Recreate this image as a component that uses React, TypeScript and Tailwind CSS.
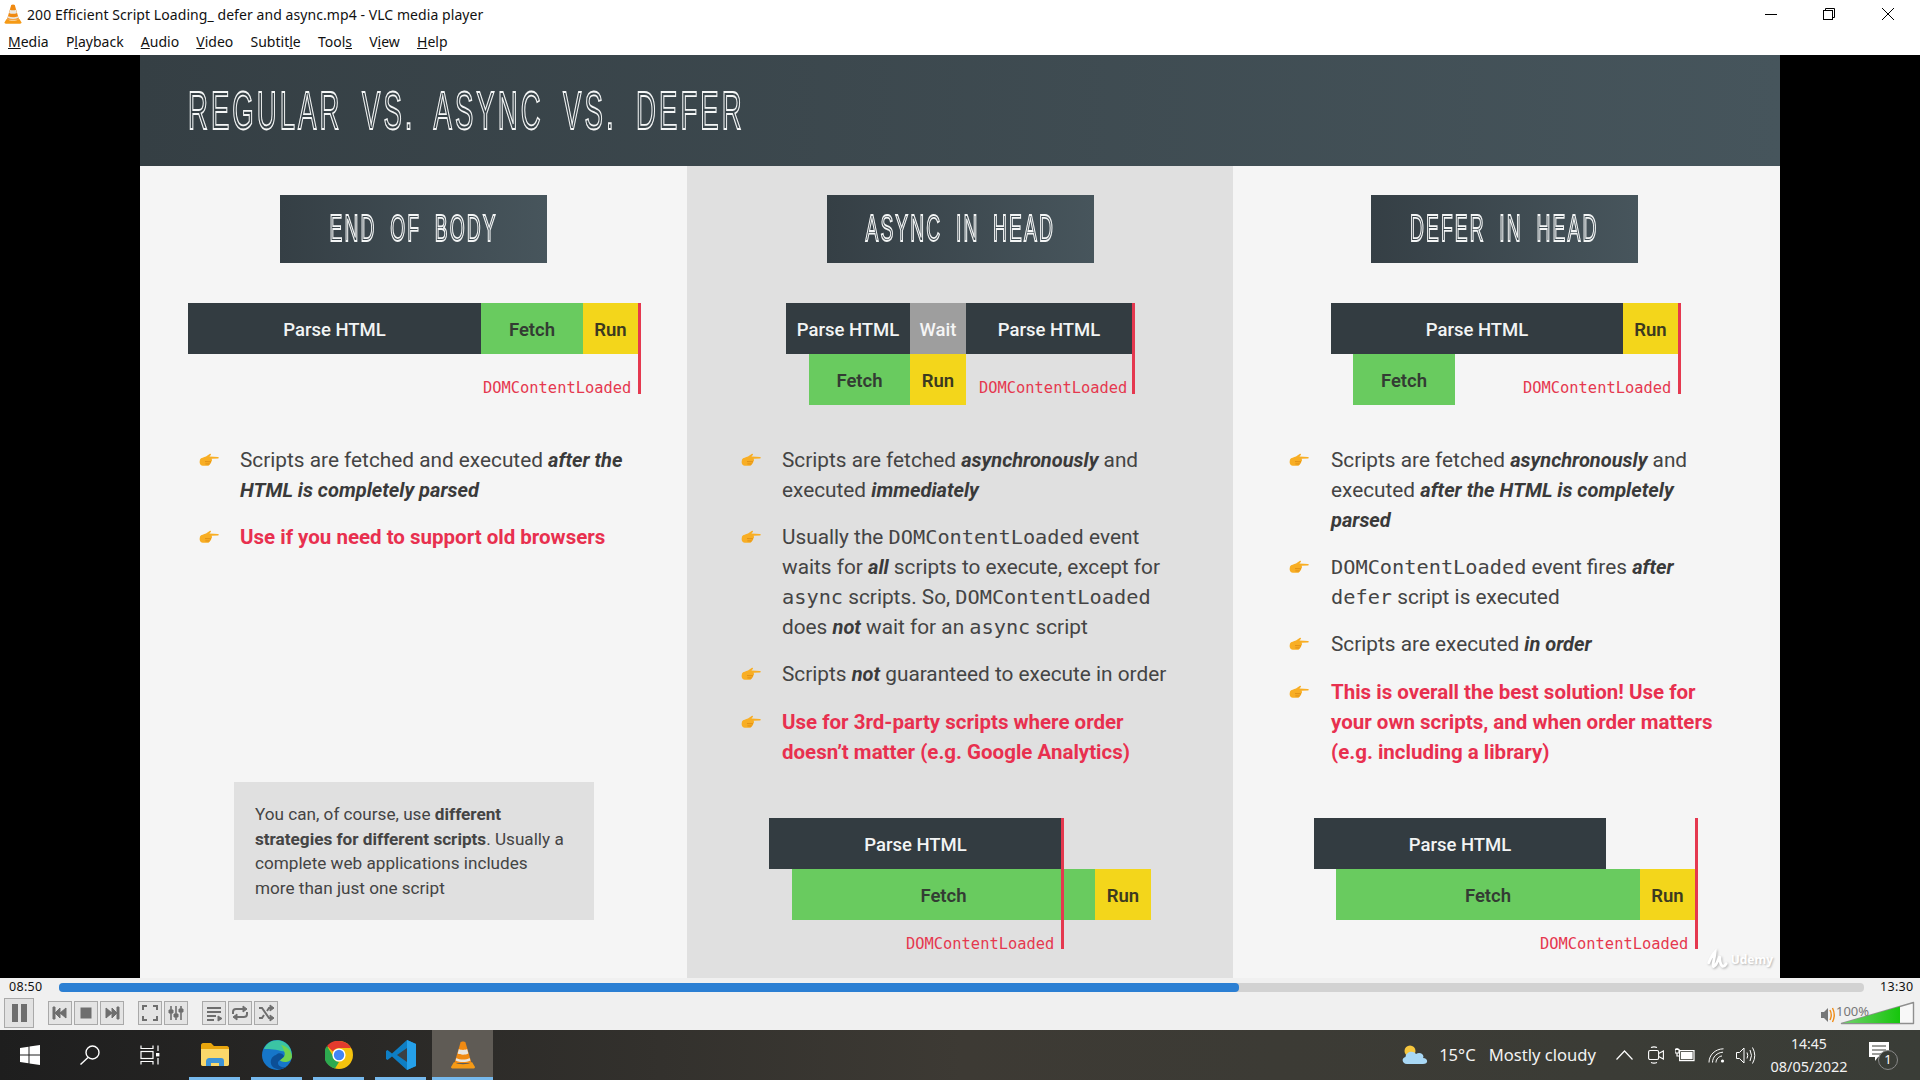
import type { ReactNode } from "react";

const roboto = "font-['Roboto',sans-serif]";
const mono = "font-['DejaVu_Sans_Mono',monospace]";
const ui = "font-['Noto_Sans',sans-serif]";

type Cell = { label: string; kind: "parse" | "wait" | "fetch" | "run"; w: string };
type Row = { ml: string; cells: Cell[]; note?: string };

const cellStyle = {
  parse: "bg-[#333c41] text-[#f2f4f4] font-medium",
  wait: "bg-[#9e9e9e] text-[#f5f5f5] font-medium",
  fetch: "bg-[#69cb5f] text-[#333c33] font-semibold",
  run: "bg-[#f3d61b] text-[#3c3a20] font-semibold",
};

function Hand() {
  return (
    <svg width="20" height="14" viewBox="0 0 20 14" className="mt-[8px] shrink-0">
      <path
        d="M1 6.5 C2 4.5 5 4.5 7 3.5 L11 .8 C12 .4 12.4 1.6 11.6 2.3 L10.4 3.6 L19 3.9 C20 4.2 20 5.2 19 5.4 L12.6 5.8 C13.4 7 13 8.4 12.2 8.8 C12.4 10 11.6 10.8 10.8 11 C10.6 12.2 9.8 12.8 8.6 12.8 L4 12.8 C2 12.8 .6 11 .6 9 Z"
        fill="#f8ae24"
      />
      <path d="M6 8.6 L12 8.8 M6.4 10.9 L10.8 11" stroke="#d98710" strokeWidth=".8" />
    </svg>
  );
}

function Code({ children }: { children: ReactNode }) {
  return <span className={`${mono} text-[20.3px]`}>{children}</span>;
}

function Strong({ children }: { children: ReactNode }) {
  return <em className="text-[20px] font-bold italic text-[#3a3a3a]">{children}</em>;
}

function Red({ children }: { children: ReactNode }) {
  return <span className="text-[20.5px] font-bold text-[#e8304f]">{children}</span>;
}

function Bullets({ ml, gap, items }: { ml: string; gap: string; items: ReactNode[] }) {
  return (
    <ul className={`flex flex-col gap-[17.2px] ${ml}`}>
      {items.map((item, i) => (
        <li key={i} className={`flex ${gap} ${roboto} text-[20.8px] leading-[30px] text-[#444] whitespace-nowrap`}>
          <Hand />
          <p>{item}</p>
        </li>
      ))}
    </ul>
  );
}

function Gantt({
  ml,
  rows,
  marker,
  markerH,
  labelMl,
  labelPt,
}: {
  ml: string;
  rows: Row[];
  marker: string;
  markerH: string;
  labelMl?: string;
  labelPt?: string;
}) {
  return (
    <div className={`relative ${ml} ${roboto} text-[18.5px]`}>
      {rows.map((row, i) => (
        <div key={i} className={`flex h-[51px] ${row.ml}`}>
          {row.cells.map((c, j) => (
            <div key={j} className={`flex items-center justify-center pt-[5px] ${c.w} ${cellStyle[c.kind]}`}>
              {c.label}
            </div>
          ))}
          {row.note && (
            <span className={`${mono} ${row.note} pt-[24px] text-[15.4px] leading-[20px] text-[#e5384f]`}>
              DOMContentLoaded
            </span>
          )}
        </div>
      ))}
      {labelMl && (
        <div className={`${mono} ${labelMl} ${labelPt} text-[15.4px] leading-[20px] text-[#e5384f]`}>
          DOMContentLoaded
        </div>
      )}
      <div className={`absolute top-0 w-[3px] bg-[#e5384f] ${marker} ${markerH}`} />
    </div>
  );
}

function Badge({ ml, children }: { ml: string; children: string }) {
  return (
    <div
      className={`flex h-[68px] w-[267px] shrink-0 items-center justify-center bg-gradient-to-r from-[#353f45] to-[#47555c] ${ml}`}
    >
      <OutlineText size="text-[37px] origin-center">{children}</OutlineText>
    </div>
  );
}

function OutlineText({ size, children }: { size: string; children: string }) {
  return (
    <span
      className={`inline-block scale-x-[0.52] whitespace-nowrap font-['Liberation_Sans_Narrow','Liberation_Sans',sans-serif] tracking-[0.11em] text-transparent [word-spacing:0.32em] [-webkit-text-stroke:1.8px_#f4f6f6] ${size}`}
    >
      {children}
    </span>
  );
}

function CtlBtn({ children, className }: { children: ReactNode; className?: string }) {
  return (
    <button className={`flex h-[24px] w-[24px] items-center justify-center border border-[#a9a9a9] bg-[#e4e4e4] ${className ?? ""}`}>
      <svg width="18" height="18" viewBox="0 0 18 18" fill="#6e6e6e" stroke="#6e6e6e">
        {children}
      </svg>
    </button>
  );
}

function VlcCone({ size }: { size: number }) {
  return (
    <svg width={size} height={size} viewBox="0 0 26 28">
      <path d="M10.5 1.5 C11.5 .2 14.5 .2 15.5 1.5 L21.5 22 L4.5 22 Z" fill="#f08a12" />
      <path d="M8.9 8 C11 9.2 15 9.2 17.1 8 L18.4 12.6 C15.5 14.2 10.5 14.2 7.6 12.6 Z" fill="#e9e6e0" />
      <path d="M6.4 17 C10 19 16 19 19.6 17 L20.4 19.5 C16 21.6 10 21.6 5.6 19.5 Z" fill="#e9e6e0" />
      <path d="M4 21 L1 26 C1 27 2 27.6 3 27.6 L23 27.6 C24 27.6 25 27 25 26 L22 21 C18 24 8 24 4 21 Z" fill="#f59a16" />
    </svg>
  );
}

function TaskApp({ active, children }: { active?: boolean; children: ReactNode }) {
  return (
    <div className={`relative flex h-[50px] items-center justify-center ${active ? "w-[61px] bg-[#5f5b55]" : "w-[51px]"}`}>
      {children}
      <div className={`absolute bottom-0 h-[3px] bg-[#76b9ed] ${active ? "w-[61px]" : "w-[51px]"}`} />
    </div>
  );
}

const menus = ["Media", "Playback", "Audio", "Video", "Subtitle", "Tools", "View", "Help"];
const underlined = [0, 1, 0, 0, 6, 4, 1, 0];

export default function App() {
  return (
    <div className={`flex h-[1080px] w-[1920px] flex-col overflow-hidden bg-white ${ui}`}>
      {/* title bar */}
      <div className="flex h-[28px] items-center">
        <div className="ml-[3px] w-[24px]">
          <VlcCone size={20} />
        </div>
        <span className="text-[14px] tracking-[0.07px] text-[#111]">
          200 Efficient Script Loading_ defer and async.mp4 - VLC media player
        </span>
        <div className="ml-auto flex items-center">
          <div className="mr-[46px] h-px w-[12px] bg-black" />
          <svg width="12" height="12" viewBox="0 0 12 12" fill="none" stroke="black" className="mr-[47px]">
            <rect x=".5" y="2.5" width="9" height="9" />
            <path d="M2.5 2.5 V.5 H11.5 V9.5 H9.5" />
          </svg>
          <svg width="12" height="12" viewBox="0 0 12 12" stroke="black" className="mr-[26px]">
            <path d="M0 0 L12 12 M12 0 L0 12" />
          </svg>
        </div>
      </div>

      {/* menu bar */}
      <div className="flex h-[27px] items-center gap-[17.2px] pl-[8px] text-[14px] text-[#111]">
        {menus.map((m, i) => (
          <span key={m}>
            {m.slice(0, underlined[i])}
            <span className="underline">{m[underlined[i]]}</span>
            {m.slice(underlined[i] + 1)}
          </span>
        ))}
      </div>

      {/* video */}
      <div className="flex h-[923px] justify-center bg-black">
        <div className="relative flex w-[1640px] flex-col bg-[#f5f5f5]">
          <div className="flex h-[111px] items-center bg-gradient-to-r from-[#353f44] to-[#46555c] pl-[48px]">
            <OutlineText size="text-[53px] origin-left">REGULAR VS. ASYNC VS. DEFER</OutlineText>
          </div>
          <div className="flex flex-1">
            {/* end of body */}
            <section className="flex w-[547px] flex-col pt-[29px]">
              <Badge ml="ml-[140px]">END OF BODY</Badge>
              <div className="mt-[40px] h-[142px]">
                <Gantt
                  ml="ml-[48px]"
                  marker="left-[450px]"
                  markerH="h-[91px]"
                  rows={[
                    {
                      ml: "",
                      cells: [
                        { label: "Parse HTML", kind: "parse", w: "w-[293px]" },
                        { label: "Fetch", kind: "fetch", w: "w-[102px]" },
                        { label: "Run", kind: "run", w: "w-[55px]" },
                      ],
                    },
                    { ml: "", cells: [], note: "ml-[295px]" },
                  ]}
                />
              </div>
              <Bullets
                ml="ml-[59px]"
                gap="gap-[21px]"
                items={[
                  <>
                    Scripts are fetched and executed <Strong>after the</Strong>
                    <br />
                    <Strong>HTML is completely parsed</Strong>
                  </>,
                  <Red>Use if you need to support old browsers</Red>,
                ]}
              />
              <div className={`mb-[58px] ml-[94px] mt-auto h-[138px] w-[360px] bg-[#e0e0e0] px-[21px] py-[20px] ${roboto} text-[17.15px] leading-[24.5px] text-[#444] whitespace-nowrap`}>
                You can, of course, use <b className="font-bold">different</b>
                <br />
                <b className="font-bold">strategies for different scripts</b>. Usually a
                <br />
                complete web applications includes
                <br />
                more than just one script
              </div>
            </section>

            {/* async in head */}
            <section className="flex w-[546px] flex-col bg-[#e0e0e0] pt-[29px]">
              <Badge ml="ml-[140px]">ASYNC IN HEAD</Badge>
              <div className="mt-[40px] h-[142px]">
                <Gantt
                  ml="ml-[99px]"
                  marker="left-[346px]"
                  markerH="h-[91px]"
                  rows={[
                    {
                      ml: "",
                      cells: [
                        { label: "Parse HTML", kind: "parse", w: "w-[124px]" },
                        { label: "Wait", kind: "wait", w: "w-[56px]" },
                        { label: "Parse HTML", kind: "parse", w: "w-[166px]" },
                      ],
                    },
                    {
                      ml: "ml-[23px]",
                      cells: [
                        { label: "Fetch", kind: "fetch", w: "w-[101px]" },
                        { label: "Run", kind: "run", w: "w-[56px]" },
                      ],
                      note: "ml-[13px]",
                    },
                  ]}
                />
              </div>
              <Bullets
                ml="ml-[54px]"
                gap="gap-[21px]"
                items={[
                  <>
                    Scripts are fetched <Strong>asynchronously</Strong> and
                    <br />
                    executed <Strong>immediately</Strong>
                  </>,
                  <>
                    Usually the <Code>DOMContentLoaded</Code> event
                    <br />
                    waits for <Strong>all</Strong> scripts to execute, except for
                    <br />
                    <Code>async</Code> scripts. So, <Code>DOMContentLoaded</Code>
                    <br />
                    does <Strong>not</Strong> wait for an <Code>async</Code> script
                  </>,
                  <>
                    Scripts <Strong>not</Strong> guaranteed to execute in order
                  </>,
                  <Red>
                    Use for 3rd-party scripts where order
                    <br />
                    doesn’t matter (e.g. Google Analytics)
                  </Red>,
                ]}
              />
              <div className="mb-[24px] mt-auto">
                <Gantt
                  ml="ml-[82px]"
                  marker="left-[292px]"
                  markerH="h-[131px]"
                  labelMl="ml-[137px]"
                  labelPt="pt-[14px]"
                  rows={[
                    { ml: "", cells: [{ label: "Parse HTML", kind: "parse", w: "w-[293px]" }] },
                    {
                      ml: "ml-[23px]",
                      cells: [
                        { label: "Fetch", kind: "fetch", w: "w-[303px]" },
                        { label: "Run", kind: "run", w: "w-[56px]" },
                      ],
                    },
                  ]}
                />
              </div>
            </section>

            {/* defer in head */}
            <section className="flex w-[547px] flex-col pt-[29px]">
              <Badge ml="ml-[138px]">DEFER IN HEAD</Badge>
              <div className="mt-[40px] h-[142px]">
                <Gantt
                  ml="ml-[98px]"
                  marker="left-[347px]"
                  markerH="h-[91px]"
                  rows={[
                    {
                      ml: "",
                      cells: [
                        { label: "Parse HTML", kind: "parse", w: "w-[292px]" },
                        { label: "Run", kind: "run", w: "w-[55px]" },
                      ],
                    },
                    {
                      ml: "ml-[22px]",
                      cells: [{ label: "Fetch", kind: "fetch", w: "w-[102px]" }],
                      note: "ml-[68px]",
                    },
                  ]}
                />
              </div>
              <Bullets
                ml="ml-[56px]"
                gap="gap-[22px]"
                items={[
                  <>
                    Scripts are fetched <Strong>asynchronously</Strong> and
                    <br />
                    executed <Strong>after the HTML is completely</Strong>
                    <br />
                    <Strong>parsed</Strong>
                  </>,
                  <>
                    <Code>DOMContentLoaded</Code> event fires <Strong>after</Strong>
                    <br />
                    <Code>defer</Code> script is executed
                  </>,
                  <>
                    Scripts are executed <Strong>in order</Strong>
                  </>,
                  <Red>
                    This is overall the best solution! Use for
                    <br />
                    your own scripts, and when order matters
                    <br />
                    (e.g. including a library)
                  </Red>,
                ]}
              />
              <div className="mb-[24px] mt-auto">
                <Gantt
                  ml="ml-[81px]"
                  marker="left-[381px]"
                  markerH="h-[131px]"
                  labelMl="ml-[226px]"
                  labelPt="pt-[14px]"
                  rows={[
                    { ml: "", cells: [{ label: "Parse HTML", kind: "parse", w: "w-[292px]" }] },
                    {
                      ml: "ml-[22px]",
                      cells: [
                        { label: "Fetch", kind: "fetch", w: "w-[304px]" },
                        { label: "Run", kind: "run", w: "w-[55px]" },
                      ],
                    },
                  ]}
                />
              </div>
            </section>
          </div>
          {/* watermark */}
          <div className="absolute bottom-[6px] right-[7px] flex items-center gap-[3px] text-[12px] font-bold text-white [text-shadow:1px_1px_2px_#b5b5b5]">
            <svg width="22" height="24" viewBox="0 0 24 24" fill="none" stroke="#fff" strokeWidth="3" strokeLinecap="round" className="drop-shadow-[1px_1px_1px_#b5b5b5]">
              <path d="M3 15 C5 10 9 4 10 3 C10 8 7 15 8 19 C10 20 13 13 15 8 C15 12 15 17 18 19 C20 19 21 18 22 16" />
            </svg>
            <span>Udemy</span>
          </div>
        </div>
      </div>

      {/* player controls */}
      <div className="flex h-[52px] flex-col bg-[#f0f0f0]">
        <div className="flex h-[18px] items-center text-[12.5px] tracking-[0.3px] text-[#111]">
          <span className="ml-[9px] w-[50px]">08:50</span>
          <div className="h-[9px] w-[1805px] rounded-[4px] bg-[#d2d2d2]">
            <div className="h-[9px] w-[1180px] rounded-[4px] bg-[#2b7fd3]" />
          </div>
          <span className="ml-[16px]">13:30</span>
        </div>
        <div className="relative flex flex-1 items-center pl-[4px]">
          <button className="flex h-[30px] w-[30px] items-center justify-center border border-[#a9a9a9] bg-[#e2e2e2]">
            <svg width="16" height="18" viewBox="0 0 16 18" fill="#6e6e6e">
              <rect x="1" y="0" width="6" height="18" />
              <rect x="10" y="0" width="6" height="18" />
            </svg>
          </button>
          <div className="ml-[14px] flex gap-[2px]">
            <CtlBtn>
              <path d="M2 3 H4 V15 H2 Z M9 4 V14 L4 9 Z M15 4 V14 L9 9 Z" />
            </CtlBtn>
            <CtlBtn>
              <rect x="4" y="4" width="10" height="10" />
            </CtlBtn>
            <CtlBtn>
              <path d="M16 3 H14 V15 H16 Z M9 4 V14 L14 9 Z M3 4 V14 L9 9 Z" />
            </CtlBtn>
          </div>
          <div className="ml-[14px] flex gap-[2px]">
            <CtlBtn>
              <path d="M2 6 V2 H6 M12 2 H16 V6 M16 12 V16 H12 M6 16 H2 V12" fill="none" strokeWidth="2" />
            </CtlBtn>
            <CtlBtn>
              <path d="M4 2 V16 M9 2 V16 M14 2 V16" fill="none" strokeWidth="1.6" />
              <path d="M2 6 H6 V9 H2 Z M7 10 H11 V13 H7 Z M12 5 H16 V8 H12 Z" />
            </CtlBtn>
          </div>
          <div className="ml-[14px] flex gap-[2px]">
            <CtlBtn>
              <path d="M2 4 H16 M2 8 H16 M2 12 H11 M2 16 H9" fill="none" strokeWidth="2" />
              <path d="M13 12 V17 L17 14.5 Z" />
            </CtlBtn>
            <CtlBtn>
              <path d="M2 10 V8 Q2 5 5 5 H13 M16 8 V10 Q16 13 13 13 H5" fill="none" strokeWidth="2" />
              <path d="M12 2 V8 L16 5 Z M6 10 V16 L2 13 Z" />
            </CtlBtn>
            <CtlBtn>
              <path d="M2 4 H5 L12 14 H14 M2 14 H5 L7 11 M10 7 L12 4 H14" fill="none" strokeWidth="2" />
              <path d="M13 1 L17 4 L13 7 Z M13 11 L17 14 L13 17 Z" />
            </CtlBtn>
          </div>
          {/* volume */}
          <div className="absolute left-[1820px] top-[3px] h-[26px] w-[95px]">
            <svg width="95" height="26" viewBox="0 0 95 26">
              <defs>
                <linearGradient id="vol" x1="0" x2="1" y1="0" y2="0">
                  <stop offset="0" stopColor="#6fd06a" />
                  <stop offset="1" stopColor="#16c60c" />
                </linearGradient>
              </defs>
              <path d="M1 13 H4 L8 9 V23 L4 19 H1 Z" fill="#777" />
              <path d="M10 11 Q12.5 16 10 21 M12.5 9 Q16 16 12.5 23" fill="none" stroke="#f08a12" strokeWidth="1.4" />
              <path d="M21.5 24.5 L93.5 3.5 V24.5 Z" fill="#f8f8f8" stroke="#8f8f8f" strokeWidth="1.4" strokeLinejoin="round" />
              <path d="M23 24 L80 7.5 V24 Z" fill="url(#vol)" />
            </svg>
            <span className="absolute left-[16px] top-[4px] text-[13px] leading-[16px] text-[#777]">100%</span>
          </div>
        </div>
      </div>

      {/* taskbar */}
      <div className="flex h-[50px] items-center bg-gradient-to-r from-[#1e1e1e] via-[#3d3a34] to-[#3a3d37] text-white">
        <div className="flex w-[60px] justify-center">
          <svg width="20" height="20" viewBox="0 0 20 20" fill="#fff">
            <path d="M0 3 L8.5 1.8 V9.4 H0 Z M9.5 1.6 L20 0 V9.4 H9.5 Z M0 10.4 H8.5 V18.2 L0 17 Z M9.5 10.4 H20 V20 L9.5 18.4 Z" />
          </svg>
        </div>
        <div className="flex w-[60px] justify-center">
          <svg width="20" height="20" viewBox="0 0 20 20" fill="none" stroke="#fff" strokeWidth="1.4">
            <circle cx="12.5" cy="7.5" r="6.5" />
            <path d="M8 12.5 L.5 19.5" />
          </svg>
        </div>
        <div className="flex w-[60px] justify-center">
          <svg width="20" height="20" viewBox="0 0 20 20" fill="none" stroke="#fff" strokeWidth="1.2">
            <path d="M1 .5 V3.5 H13 V.5 M1 19.5 V16.5 H13 V19.5" />
            <rect x="1" y="6.5" width="12" height="7" />
            <path d="M18 .5 V6 M18 13 V19.5" />
            <rect x="16" y="8" width="3.4" height="3.4" fill="#fff" stroke="none" />
          </svg>
        </div>
        <div className="ml-[9px] flex w-[243px] gap-[11px]">
          <TaskApp>
            <svg width="28" height="24" viewBox="0 0 28 24">
              <path d="M0 2 C0 1 1 0 2 0 H10 L13 3 H26 C27 3 28 4 28 5 V21 C28 22 27 23 26 23 H2 C1 23 0 22 0 21 Z" fill="#e8a50d" />
              <path d="M0 6 H28 V21 C28 22 27 23 26 23 H2 C1 23 0 22 0 21 Z" fill="#fbd86a" />
              <path d="M5 23 V18 C5 16 7 15 8 15 H20 C22 15 23 16 23 18 V23 H18 V20 H10 V23 Z" fill="#3d93d6" />
            </svg>
          </TaskApp>
          <TaskApp>
            <svg width="30" height="30" viewBox="0 0 30 30">
              <circle cx="15" cy="15" r="15" fill="#1676c9" />
              <path d="M2 9 C5 1 15 -2 22 2 C28 5 31 12 29 18 C27 14 24 11 19 11 C12 9 5 9 2 9 Z" fill="#3bc4a4" />
              <path d="M19 5 C25 6 30 11 30 17 C29 21 26 22 23 22 C20 22 18 21 17 19 C22 19 24 15 22 11 C21 8 20 6 19 5 Z" fill="#70d24e" />
              <path d="M14 15 C16 12 21 13 22 16 C20 20 16 20 16 23 C16 26 20 28 24 27 C20 30 13 30 10 26 C7 21 10 16 14 15 Z" fill="#0c4f96" />
            </svg>
          </TaskApp>
          <TaskApp>
            <svg width="28" height="28" viewBox="0 0 28 28">
              <circle cx="14" cy="14" r="14" fill="#f4c20d" />
              <path d="M14 0 A14 14 0 0 1 26.1 7 L14 7 A7 7 0 0 0 7.9 10.5 L2 4.9 A14 14 0 0 1 14 0 Z" fill="#e33b2e" />
              <path d="M2 4.9 L8 15 A7 7 0 0 0 14 21 L10 27.4 A14 14 0 0 1 2 4.9 Z" fill="#2da94f" />
              <circle cx="14" cy="14" r="6.6" fill="#fff" />
              <circle cx="14" cy="14" r="5.2" fill="#4285f4" />
            </svg>
          </TaskApp>
          <TaskApp>
            <svg width="30" height="30" viewBox="0 0 30 30">
              <path d="M21 0 L30 4 V26 L21 30 L6 16.5 L1.5 20 L0 19 V11 L1.5 10 L6 13.5 Z" fill="#0e7ec4" />
              <path d="M21 0 L30 4 V26 L21 30 Z" fill="#25a0ea" />
              <path d="M21 8 V22 L11 15 Z" fill="#3b4045" />
            </svg>
          </TaskApp>
        </div>
        <TaskApp active>
          <VlcCone size={28} />
        </TaskApp>

        <div className="ml-auto flex items-center">
          <svg width="26" height="20" viewBox="0 0 26 20" className="mr-[11px]">
            <circle cx="8" cy="6" r="5.5" fill="#f6c63d" />
            <path d="M5 19 C0 19 -1 13 3.5 12 C4 7 11 5 14 9 C18 6 23 10 21 13 C26 13 27 19 21 19 Z" fill="#a9d8f5" />
          </svg>
          <span className="text-[16.6px] text-[#f2f2f2]">15°C</span>
          <span className="ml-[13px] text-[16.6px] text-[#f2f2f2]">Mostly cloudy</span>
          <svg width="17" height="10" viewBox="0 0 17 10" fill="none" stroke="#fff" strokeWidth="1.2" className="ml-[20px]">
            <path d="M.5 9.5 L8.5 1 L16.5 9.5" />
          </svg>
          <svg width="16" height="18" viewBox="0 0 16 18" fill="none" stroke="#fff" strokeWidth="1.1" className="ml-[15px]">
            <rect x=".6" y="4.5" width="10" height="9" rx="1.5" />
            <path d="M10.6 7.5 L15.4 5 V13 L10.6 10.5 M3 1.5 Q6 .2 9 1.5 M3 16.5 Q6 17.8 9 16.5" />
          </svg>
          <svg width="20" height="14" viewBox="0 0 20 14" fill="none" stroke="#fff" strokeWidth="1.2" className="ml-[11px]">
            <rect x="4.6" y="2.6" width="14.4" height="10" />
            <rect x="6" y="4" width="11.6" height="7.2" fill="#fff" stroke="none" />
            <path d="M0 1.5 H4 V5 H0 Z M1.2 0 V1.5 M2.8 0 V1.5 M2 5 V8 H4.6" />
          </svg>
          <svg width="17" height="15" viewBox="0 0 17 15" fill="none" stroke="#fff" strokeWidth="1" className="ml-[13px]">
            <path d="M1 14.5 C1 7 7 1 15.5 .8 M4.5 14.5 C4.5 9 9 4.5 15 4.2 M8 14.5 C8 11 11 8.2 14 8" />
            <circle cx="14.5" cy="13" r="1.6" fill="#fff" stroke="none" />
          </svg>
          <svg width="20" height="17" viewBox="0 0 20 17" fill="none" stroke="#fff" strokeWidth="1" className="ml-[11px]">
            <path d="M.5 5.5 H3.5 L8 1 V16 L3.5 11.5 H.5 Z M11 5.5 Q12.5 8.5 11 11.5 M14 3 Q17 8.5 14 14 M16.5 .5 Q21 8.5 16.5 16.5" />
          </svg>
          <div className="ml-[11px] flex w-[84px] flex-col items-center text-[14px] leading-[23px] text-[#f2f2f2]">
            <span>14:45</span>
            <span className="text-[14.5px]">08/05/2022</span>
          </div>
          <div className="relative ml-[18px] mr-[31px] h-[28px] w-[20px]">
            <svg width="20" height="20" viewBox="0 0 20 20" className="absolute top-[1px]">
              <path d="M0 0 H20 V15 H9 L6 19 V15 H0 Z" fill="#fff" />
              <path d="M3 4 H17 M3 8 H17 M3 12 H12" stroke="#3a3d37" strokeWidth="1" />
            </svg>
            <span className="absolute left-[9px] top-[9px] flex h-[20px] w-[20px] items-center justify-center rounded-full border border-[#888] bg-[#3a3d37] text-[13px]">
              1
            </span>
          </div>
        </div>
      </div>
    </div>
  );
}
